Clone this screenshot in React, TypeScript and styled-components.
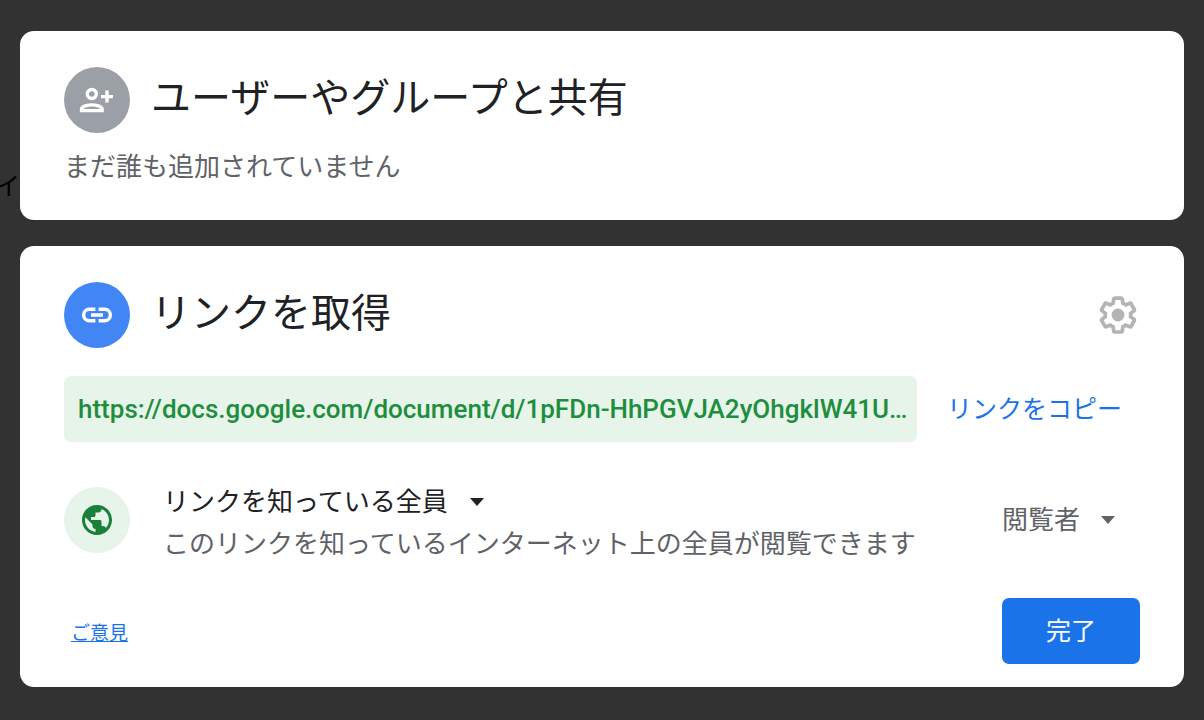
import React from "react";
import styled, { createGlobalStyle } from "styled-components";
import { MdPublic } from "react-icons/md";

const GlobalStyle = createGlobalStyle`
  *, *::before, *::after { box-sizing: border-box; }
  body {
    margin: 0;
    background: #323232;
    font-family: Roboto, "Noto Sans CJK JP", sans-serif;
    font-size: 26px;
    color: #202124;
  }
  button, input, select { font: inherit; margin: 0; border: 0; }
`;

const Page = styled.main`
  position: relative;
  min-height: 100vh;
  overflow: hidden;
  padding: 31px 20px;
  display: flex;
  flex-direction: column;
  gap: 26px;
`;

const BackdropText = styled.span`
  position: absolute;
  left: -5px;
  top: 169px;
  font-size: 25px;
  line-height: 36px;
  color: #000;
`;

const Card = styled.section<{ $bottom: number }>`
  position: relative;
  padding: 36px 44px ${(p) => p.$bottom}px;
  background: #fff;
  border-radius: 14px;
`;

const CardHeader = styled.header`
  display: flex;
  align-items: center;
`;

const Badge = styled.span<{ $bg: string; $fg: string }>`
  flex: none;
  width: 66px;
  height: 66px;
  border-radius: 50%;
  display: grid;
  place-items: center;
  background: ${(p) => p.$bg};
  color: ${(p) => p.$fg};
`;

const Title = styled.h2`
  flex: 1;
  margin: 0 0 2px 21px;
  font-size: 40px;
  line-height: 48px;
  font-weight: 400;
`;

const Subtitle = styled.p`
  margin: 16px 0 0;
  line-height: 36px;
  color: #5f6368;
`;

const IconButton = styled.button`
  display: grid;
  padding: 0;
  background: none;
  color: #b4b4b4;
  cursor: pointer;
`;

const LinkRow = styled.div`
  display: flex;
  gap: 14px;
  margin-top: 28px;
`;

const LinkField = styled.input`
  flex: 1;
  min-width: 0;
  height: 66px;
  padding: 0 8px 0 14px;
  border-radius: 7px;
  background: #e6f4ea;
  color: #1e8e3e;
  font-weight: 500;
  text-overflow: ellipsis;
`;

const TextButton = styled.button`
  padding: 0 18px 4px 16px;
  background: none;
  color: #1a73e8;
  font-size: 25px;
  white-space: nowrap;
  cursor: pointer;
`;

const AccessRow = styled.div`
  display: flex;
  align-items: flex-start;
  margin-top: 45px;
`;

const AccessText = styled.div`
  flex: 1;
  min-width: 0;
  margin: -6px 0 0 33px;
  line-height: 42px;
`;

const Description = styled.p`
  margin: 0;
  color: #5f6368;
`;

const SelectBox = styled.div<{ $color: string }>`
  display: inline-grid;
  align-items: center;
  justify-items: end;
  vertical-align: top;
  color: ${(p) => p.$color};

  > * { grid-area: 1 / 1; }
  > svg { pointer-events: none; }
`;

const Select = styled.select`
  appearance: none;
  height: 42px;
  padding: 0 34px 0 0;
  background: none;
  color: inherit;
  cursor: pointer;
`;

const RoleColumn = styled.div`
  display: flex;
  align-items: center;
  width: 138px;
  height: 66px;
`;

const Footer = styled.footer`
  display: flex;
  align-items: center;
  justify-content: space-between;
  margin-top: 33px;
  padding-left: 7px;
`;

const FeedbackLink = styled.a`
  font-size: 19px;
  color: #1a73e8;
`;

const DoneButton = styled.button`
  width: 138px;
  height: 66px;
  padding: 0 0 4px;
  border-radius: 7px;
  background: #1a73e8;
  color: #fff;
  font-size: 25px;
  cursor: pointer;
`;

const PersonAddIcon = () => (
  <svg width="66" height="66" viewBox="0 0 66 66" fill="none" stroke="currentColor" strokeWidth="3.4" aria-hidden="true">
    <circle cx="27.8" cy="27" r="4.5" />
    <path d="M17.5 43.6h20.6v-1.3c0-3-6.5-4.4-10.3-4.4s-10.3 1.4-10.3 4.4z" />
    <path d="M43 23.6v12M37 29.6h12" />
  </svg>
);

const LinkIcon = () => (
  <svg width="36" height="36" viewBox="0 0 36 36" fill="none" stroke="currentColor" strokeWidth="3.4" aria-hidden="true">
    <path d="M16.4 12.2h-6a5.8 5.8 0 0 0 0 11.6h6M19.6 12.2h6a5.8 5.8 0 0 1 0 11.6h-6M12 18h12" />
  </svg>
);

const GearIcon = () => (
  <svg width="44" height="44" viewBox="0 0 24 24" fill="currentColor" aria-hidden="true">
    <path d="M13.85 22.25h-3.7c-.74 0-1.36-.54-1.45-1.27l-.27-1.89c-.27-.14-.53-.29-.79-.46l-1.8.72c-.7.26-1.47-.03-1.81-.65L2.2 15.53c-.35-.66-.2-1.44.36-1.88l1.53-1.19c-.01-.15-.02-.3-.02-.46 0-.15.01-.31.02-.46l-1.52-1.19c-.59-.45-.74-1.26-.37-1.88l1.85-3.19c.34-.62 1.11-.9 1.79-.63l1.81.73c.26-.17.52-.32.78-.46l.27-1.91c.09-.7.71-1.25 1.44-1.25h3.7c.74 0 1.36.54 1.45 1.27l.27 1.89c.27.14.53.29.79.46l1.8-.72c.71-.26 1.48.03 1.82.65l1.84 3.18c.36.66.2 1.44-.36 1.88l-1.52 1.19c.01.15.02.3.02.46s-.01.31-.02.46l1.52 1.19c.56.45.72 1.23.37 1.86l-1.86 3.22c-.34.62-1.11.9-1.8.63l-1.8-.72c-.26.17-.52.32-.78.46l-.27 1.91c-.1.68-.72 1.22-1.46 1.22zm-3.23-2h2.76l.37-2.55.53-.22c.44-.18.88-.44 1.34-.78l.45-.34 2.38.96 1.38-2.4-2.03-1.58.07-.56c.03-.26.06-.51.06-.78s-.03-.53-.06-.78l-.07-.56 2.03-1.58-1.39-2.4-2.39.96-.45-.35c-.42-.32-.87-.58-1.33-.77l-.52-.22-.37-2.55h-2.76l-.37 2.55-.53.21c-.44.19-.88.44-1.34.79l-.45.33-2.38-.95-1.39 2.39 2.03 1.58-.07.56a7 7 0 0 0-.06.79c0 .26.02.53.06.78l.07.56-2.03 1.58 1.38 2.4 2.39-.96.45.35c.43.33.86.58 1.33.77l.53.22.38 2.55z" />
    <circle cx="12" cy="12" r="3.5" />
  </svg>
);

const Caret = () => (
  <svg width="14" height="8" viewBox="0 0 14 8" fill="currentColor" aria-hidden="true">
    <path d="M0 0h14L7 8z" />
  </svg>
);

export default function App() {
  return (
    <>
      <GlobalStyle />
      <Page lang="ja">
        <BackdropText aria-hidden="true">イ</BackdropText>

        <Card $bottom={35}>
          <CardHeader>
            <Badge $bg="#9aa0a6" $fg="#fff">
              <PersonAddIcon />
            </Badge>
            <Title>ユーザーやグループと共有</Title>
          </CardHeader>
          <Subtitle>まだ誰も追加されていません</Subtitle>
        </Card>

        <Card $bottom={23}>
          <CardHeader>
            <Badge $bg="#4285f4" $fg="#fff">
              <LinkIcon />
            </Badge>
            <Title>リンクを取得</Title>
            <IconButton type="button" aria-label="設定">
              <GearIcon />
            </IconButton>
          </CardHeader>

          <LinkRow>
            <LinkField
              readOnly
              aria-label="リンク"
              value="https://docs.google.com/document/d/1pFDn-HhPGVJA2yOhgklW41U…"
            />
            <TextButton type="button">リンクをコピー</TextButton>
          </LinkRow>

          <AccessRow>
            <Badge $bg="#e6f4ea" $fg="#188038">
              <MdPublic size={36} />
            </Badge>
            <AccessText>
              <SelectBox $color="#202124">
                <Select aria-label="アクセス範囲">
                  <option>リンクを知っている全員</option>
                </Select>
                <Caret />
              </SelectBox>
              <Description>このリンクを知っているインターネット上の全員が閲覧できます</Description>
            </AccessText>
            <RoleColumn>
              <SelectBox $color="#5f6368">
                <Select aria-label="権限">
                  <option>閲覧者</option>
                </Select>
                <Caret />
              </SelectBox>
            </RoleColumn>
          </AccessRow>

          <Footer>
            <FeedbackLink href="#feedback">ご意見</FeedbackLink>
            <DoneButton type="button">完了</DoneButton>
          </Footer>
        </Card>
      </Page>
    </>
  );
}
